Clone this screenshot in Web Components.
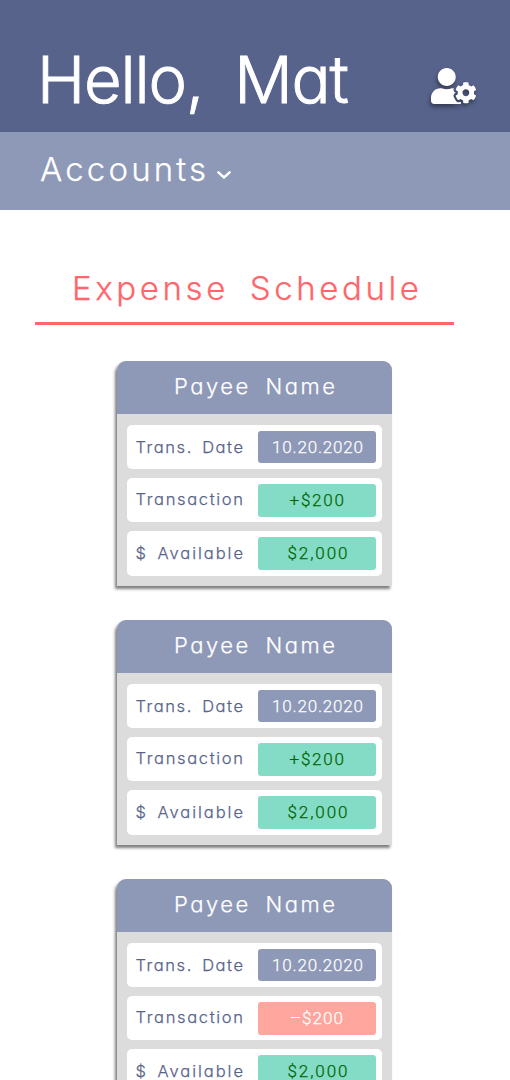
<!DOCTYPE html>
<html lang="en"><head><meta charset="utf-8"><title>Expense Schedule</title>
<style>body{margin:0;background:#fff;font-family:Inter,"Liberation Sans",sans-serif;font-weight:300;height:1080px;overflow:hidden}</style></head><body>
<budget-app></budget-app>
<script>
// Single-line text whose letter spacing is adjusted so it spans a given width.
class SpacedText extends HTMLElement{
  connectedCallback(){
    const r=this.attachShadow({mode:'open'});
    r.innerHTML=`<style>:host{display:block;white-space:pre;font-feature-settings:"cv11" 1,"calt" 0;font-kerning:normal;-webkit-text-stroke:var(--stroke,.25px) currentColor}
    span{display:inline-block;letter-spacing:0;word-spacing:var(--word,0px)}</style><span></span>`;
    const s=r.querySelector('span');s.textContent=this.getAttribute('text');
    const w=+this.getAttribute('span'),n=[...s.textContent].length;
    const gap=(w-s.getBoundingClientRect().width)/(n-1);
    s.style.letterSpacing=gap+'px';s.style.marginRight=-gap+'px';
  }
}
class GreetingBar extends HTMLElement{
  constructor(){super();this.attachShadow({mode:'open'}).innerHTML=`<style>
  :host{display:flex;box-sizing:border-box;height:132px;background:#57638b;color:#fff;justify-content:space-between;align-items:center;padding:28px 34px 0 37px}
  spaced-text{font-size:65px;line-height:104px;--word:14px;--stroke:.9px}
  svg{width:45px;height:36px;margin-top:12px;overflow:visible;filter:drop-shadow(-1px 3px 2px rgba(0,0,0,.4))}</style>
  <spaced-text text="Hello, Mat" span="312"></spaced-text>
  <svg viewBox="0 0 640 512" fill="#fff"><path d="M610.5 373.3c2.6-14.1 2.6-28.5 0-42.6l25.8-14.9c3-1.7 4.3-5.2 3.3-8.5-6.7-21.6-18.2-41.2-33.2-57.4-2.3-2.5-6-3.1-9-1.4l-25.8 14.9c-10.9-9.3-23.4-16.5-36.9-21.3v-29.8c0-3.4-2.4-6.4-5.7-7.1-22.3-5-45-4.8-66.2 0-3.3.7-5.7 3.7-5.7 7.1v29.8c-13.5 4.8-26 12-36.9 21.3l-25.8-14.9c-2.9-1.7-6.7-1.1-9 1.4-15 16.2-26.5 35.8-33.2 57.4-1 3.3.4 6.8 3.3 8.5l25.8 14.9c-2.6 14.1-2.6 28.5 0 42.6l-25.8 14.9c-3 1.7-4.3 5.2-3.3 8.5 6.7 21.6 18.2 41.1 33.2 57.4 2.3 2.5 6 3.1 9 1.4l25.8-14.9c10.9 9.3 23.4 16.5 36.9 21.3v29.8c0 3.4 2.4 6.4 5.7 7.1 22.3 5 45 4.8 66.2 0 3.3-.7 5.7-3.7 5.7-7.1v-29.8c13.5-4.8 26-12 36.9-21.3l25.8 14.9c2.9 1.7 6.7 1.1 9-1.4 15-16.2 26.5-35.8 33.2-57.4 1-3.3-.4-6.8-3.3-8.5l-25.8-14.9zM496 400.5c-26.8 0-48.5-21.8-48.5-48.5s21.8-48.5 48.5-48.5 48.5 21.8 48.5 48.5-21.7 48.5-48.5 48.5zM224 256c70.7 0 128-57.3 128-128S294.7 0 224 0 96 57.3 96 128s57.3 128 128 128zm201.2 226.5c-2.3-1.2-4.6-2.6-6.8-3.9l-7.9 4.6c-6 3.4-12.8 5.3-19.6 5.3-10.9 0-21.4-4.6-28.9-12.6-18.3-19.8-32.3-43.9-40.2-69.6-5.5-17.7 1.9-36.4 17.9-45.7l7.9-4.6c-.1-2.6-.1-5.2 0-7.8l-7.9-4.6c-16-9.2-23.4-28-17.9-45.7.9-2.9 2.2-5.8 3.2-8.7-3.8-.3-7.5-1.2-11.4-1.2h-16.7c-22.2 10.2-46.9 16-72.9 16s-50.6-5.8-72.9-16h-16.7C60.2 288 0 348.2 0 422.4V464c0 26.5 21.5 48 48 48h352c10.1 0 19.5-3.2 27.2-8.5-1.2-3.8-2-7.7-2-11.8v-9.2z"/></svg>`}
}
class AccountsBar extends HTMLElement{
  constructor(){super();this.attachShadow({mode:'open'}).innerHTML=`<style>
  :host{display:flex;box-sizing:border-box;height:78px;background:#8e98b7;color:#fff;align-items:center;padding:0 0 4px 40px}
  spaced-text{font-size:33px}
  svg{width:14px;height:8px;margin:11px 0 0 11px}</style>
  <spaced-text text="Accounts" span="166"></spaced-text>
  <svg viewBox="0 0 14 8" fill="none" stroke="#fff" stroke-width="2.4" stroke-linecap="round" stroke-linejoin="round"><path d="M1.4 1.3 7 6.5l5.6-5.2"/></svg>`}
}
class PageTitle extends HTMLElement{
  constructor(){super();this.attachShadow({mode:'open'}).innerHTML=`<style>
  :host{display:flex;box-sizing:border-box;width:419px;height:71px;margin:44px 0 0 35px;padding-left:37px;border-bottom:3px solid #ff666b;color:#ff666b}
  spaced-text{font-size:33px;line-height:68px;--word:8px}</style>
  <spaced-text text="Expense Schedule" span="347"></spaced-text>`}
}
class ExpenseRow extends HTMLElement{
  connectedCallback(){const a=k=>this.getAttribute(k);
  this.attachShadow({mode:'open'}).innerHTML=`<style>
  :host{display:flex;box-sizing:border-box;height:44.4px;background:#fff;border-radius:5px;align-items:center;padding:0 6px 0 8.5px;justify-content:space-between}
  .label{color:#57638b;font-size:16.5px;--word:${a('word')||0}px;margin-top:${a('shift')||0}px}
  .pill{display:flex;box-sizing:border-box;width:118px;height:32.5px;border-radius:3px;align-items:center;padding-left:${a('inset')}px;background:#84dcc6;color:#006400;font-family:Roboto,sans-serif;font-size:17px}
  .date{background:#8e98b7;color:#fff}.debit{background:#ffa69e;color:#fff}</style>
  <spaced-text class="label" text="${a('label')}" span="107.5"></spaced-text>
  <div class="pill ${a('kind')||''}"><spaced-text text="${a('value')}" span="${a('span')}"></spaced-text></div>`}
}
class ExpenseCard extends HTMLElement{
  constructor(){super();this.attachShadow({mode:'open'}).innerHTML=`<style>
  :host{display:block;box-sizing:border-box;width:275px;height:225px;background:#dcdcdc;border-radius:9px 9px 0 0;box-shadow:-2px 3px 3px rgba(0,0,0,.5)}
  header{display:flex;box-sizing:border-box;height:53px;padding:0 0 3px 57px;align-items:center;background:#8e98b7;color:#fff;border-radius:9px 9px 0 0;font-size:22px;--word:6px}
  section{display:grid;row-gap:8.7px;padding:11px 10px 0}</style>
  <header><spaced-text text="Payee Name" span="161"></spaced-text></header><section><slot></slot></section>`}
}
class BudgetApp extends HTMLElement{
  constructor(){super();
  const card=(v,k,i,s)=>`<expense-card>
   <expense-row label="Trans. Date" word="3" value="10.20.2020" kind="date" inset="14" span="91"></expense-row>
   <expense-row label="Transaction" shift="-2" value="${v}" kind="${k}" inset="${i}" span="${s}"></expense-row>
   <expense-row label="$ Available" word="3" value="$2,000" inset="29.5" span="60"></expense-row></expense-card>`;
  this.attachShadow({mode:'open'}).innerHTML=`<style>:host{display:block;width:510px;height:1080px;overflow:hidden}
  main{display:grid;row-gap:34px;padding:36px 0 0 117px}</style>
  <greeting-bar></greeting-bar><accounts-bar></accounts-bar><page-title></page-title>
  <main>${card('+$200','credit',31.5,54.5)}${card('+$200','credit',31.5,54.5)}${card('–$200','debit',32,53)}</main>`}
}
customElements.define('spaced-text',SpacedText);
customElements.define('greeting-bar',GreetingBar);
customElements.define('accounts-bar',AccountsBar);
customElements.define('page-title',PageTitle);
customElements.define('expense-row',ExpenseRow);
customElements.define('expense-card',ExpenseCard);
customElements.define('budget-app',BudgetApp);
</script></body></html>
